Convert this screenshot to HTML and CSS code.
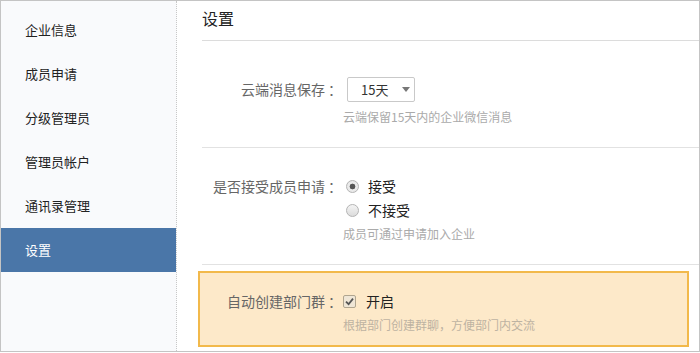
FILE: index.html
```html
<!DOCTYPE html>
<html lang="zh-CN">
<head>
  <meta charset="UTF-8">
  <title>设置</title>
  <link rel="stylesheet" href="styles.css">
</head>
<body>
  <div class="frame">
    <nav class="sidebar">
      <a class="nav-item" href="#">企业信息</a>
      <a class="nav-item" href="#">成员申请</a>
      <a class="nav-item" href="#">分级管理员</a>
      <a class="nav-item" href="#">管理员帐户</a>
      <a class="nav-item" href="#">通讯录管理</a>
      <a class="nav-item active" href="#">设置</a>
    </nav>

    <main class="main">
      <h1 class="title">设置</h1>

      <div class="row row-storage">
        <div class="label">云端消息保存<span class="colon">：</span></div>
        <div class="control">
          <div class="select">15天<span class="caret"></span></div>
          <div class="hint">云端保留15天内的企业微信消息</div>
        </div>
      </div>

      <div class="row row-apply">
        <div class="label">是否接受成员申请<span class="colon">：</span></div>
        <div class="control">
          <div class="option"><span class="radio checked"></span>接受</div>
          <div class="option"><span class="radio"></span>不接受</div>
          <div class="hint">成员可通过申请加入企业</div>
        </div>
      </div>

      <div class="row row-highlight">
        <div class="label">自动创建部门群<span class="colon">：</span></div>
        <div class="control">
          <div class="option">
            <span class="checkbox">
              <svg width="9" height="9" viewBox="0 0 9 9"><path d="M1 4.6 L3.6 7.2 L8 1.6" fill="none" stroke="#555" stroke-width="1.8"/></svg>
            </span>开启
          </div>
          <div class="hint">根据部门创建群聊，方便部门内交流</div>
        </div>
      </div>
    </main>
  </div>
</body>
</html>
```

FILE: styles.css
```css
body {
  margin: 0;
  padding: 0;
  background-color: #fff;
  font-family: "Noto Sans CJK SC", "Liberation Sans", sans-serif;
  color: #333;
}
.frame {
  display: flex;
  width: 700px;
  height: 352px;
  box-sizing: border-box;
  border: 1px solid #c4c4c4;
}
.sidebar {
  width: 176px;
  flex-shrink: 0;
  box-sizing: border-box;
  padding-top: 7px;
  background-color: #f9fafc;
  border-right: 1px dotted #c8c8c8;
}
.nav-item {
  display: block;
  height: 44px;
  line-height: 43px;
  padding-left: 24px;
  font-size: 13px;
  color: #222;
  text-decoration: none;
}
.nav-item.active {
  background-color: #4a76a8;
  color: #fff;
}
.main {
  flex: 1;
  padding-left: 25px;
}
.title {
  margin: 0;
  height: 39px;
  line-height: 34px;
  font-size: 16px;
  font-weight: normal;
  color: #222;
  border-bottom: 1px solid #dcdcdc;
}
.row {
  display: flex;
  border-bottom: 1px solid #e2e2e2;
}
.label {
  width: 141px;
  flex-shrink: 0;
  text-align: right;
  font-size: 14px;
  color: #666;
  white-space: nowrap;
}
.colon {
  display: inline-block;
  width: 18px;
  text-align: left;
  padding-left: 3px;
  box-sizing: border-box;
}
.hint {
  font-size: 12px;
  line-height: 18px;
  color: #aaa;
}

/* cloud storage row */
.row-storage {
  padding: 36px 0 21px;
}
.row-storage .label {
  line-height: 25px;
}
.select {
  display: flex;
  align-items: center;
  width: 68px;
  height: 25px;
  box-sizing: border-box;
  margin-left: 4px;
  padding-left: 13px;
  border: 1px solid #c9c9c9;
  border-radius: 2px;
  font-size: 13px;
  color: #333;
}
.caret {
  margin-left: 14px;
  border-left: 4px solid transparent;
  border-right: 4px solid transparent;
  border-top: 5px solid #777;
}
.row-storage .hint {
  margin-top: 6px;
}

/* apply row */
.row-apply {
  padding: 26px 0 21px;
}
.row-apply .label,
.row-highlight .label {
  line-height: 24px;
}
.option {
  display: flex;
  align-items: center;
  height: 24px;
  font-size: 14px;
  color: #222;
}
.radio {
  width: 11px;
  height: 11px;
  margin: 0 9px 0 3px;
  border: 1px solid #b4b4b4;
  border-radius: 50%;
  background: linear-gradient(#f4f4f4, #dcdcdc);
}
.radio.checked {
  background: radial-gradient(circle, #555 0, #555 2.6px, #ececec 3.2px, #e4e4e4 100%);
}
.row-apply .hint {
  margin-top: 3px;
}

/* highlighted row */
.row-highlight {
  margin: 6px 10px 0 -4px;
  padding: 16px 0 11px 2px;
  border: 2px solid #f2b94b;
  background-color: #fde9c9;
}
.checkbox {
  display: flex;
  align-items: center;
  justify-content: center;
  width: 11px;
  height: 11px;
  margin-right: 10px;
  border: 1px solid #b0a58f;
  border-radius: 2px;
  background-color: #efe6d6;
}
.row-highlight .hint {
  margin-top: 3px;
  color: #bdb3a2;
}
```
